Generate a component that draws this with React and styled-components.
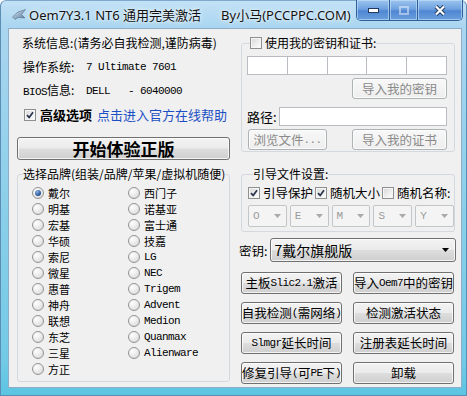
import React from "react";
import styled, { createGlobalStyle } from "styled-components";

const GlobalStyle = createGlobalStyle`
  html, body {
    margin: 0;
    padding: 0;
  }
  body {
    width: 467px;
    height: 396px;
    overflow: hidden;
    font-family: "Noto Sans CJK SC", "Noto Sans", sans-serif;
    font-size: 12px;
    color: #000;
  }
  * {
    box-sizing: border-box;
  }
`;

const brands = [
  "戴尔", "明基", "宏基", "华硕", "索尼", "微星", "惠普", "神舟", "联想", "东芝", "三星", "方正",
  "西门子", "诺基亚", "富士通", "技嘉", "LG", "NEC", "Trigem", "Advent", "Medion", "Quanmax", "Alienware"
];

const actions = [
  "主板Slic2.1激活", "导入Oem7中的密钥",
  "自我检测(需网络)", "检测激活状态",
  "Slmgr延长时间", "注册表延长时间",
  "修复引导(可PE下)", "卸载"
];

// latin runs get the narrow serif mono look of the old dialog font
const mixed = text =>
  text
    .split(/([\x20-\x7e]+)/)
    .filter(Boolean)
    .map((part, i) =>
      /^[\x20-\x7e]+$/.test(part) ? <Latin key={i}>{part}</Latin> : <span key={i}>{part}</span>
    );

function CheckBox({ checked }) {
  return (
    <Box>
      {checked && (
        <svg width="8" height="8" viewBox="0 0 8 8">
          <path d="M1 4.2 L3.2 6.4 L7 1.2" fill="none" stroke="#27324d" strokeWidth="1.7" />
        </svg>
      )}
    </Box>
  );
}

function Arrow({ color }) {
  return (
    <svg width="7" height="4" viewBox="0 0 7 4">
      <path d="M0 0 H7 L3.5 4 Z" fill={color} />
    </svg>
  );
}

function App() {
  return (
    <>
      <GlobalStyle />
      <Window>
        <TitleBar>
          <svg width="14" height="11" viewBox="0 0 14 11">
            <defs>
              <linearGradient id="ic" x1="0" y1="0" x2="1" y2="1">
                <stop offset="0" stopColor="#dfeaf4" />
                <stop offset="1" stopColor="#4f7397" />
              </linearGradient>
            </defs>
            <path d="M0.5 8 L6 3 L13.5 0.5 L9.5 5.5 L13 9 L6 8.5 L3 10.5 Z" fill="url(#ic)" stroke="#55708c" strokeWidth="0.6" />
          </svg>
          <Title>
            Oem7Y3.1 NT6 通用完美激活<By>By小马(PCCPPC.COM)</By>
          </Title>
          <Caption>
            <CapButton $w={32}>
              <svg width="11" height="5" viewBox="0 0 11 5">
                <rect x="0.5" y="0.5" width="10" height="4" fill="#fff" stroke="#1f3a5e" />
              </svg>
            </CapButton>
            <CapButton $w={28}>
              <svg width="10" height="9" viewBox="0 0 10 9" opacity="0.45">
                <rect x="1" y="1" width="8" height="7" fill="none" stroke="#fff" strokeWidth="2" />
              </svg>
            </CapButton>
            <CapButton $w={45}>
              <svg width="12" height="11" viewBox="0 0 12 11">
                <path d="M2 1.5 L10 9.5 M10 1.5 L2 9.5" stroke="#1f3a5e" strokeWidth="4" />
                <path d="M2 1.5 L10 9.5 M10 1.5 L2 9.5" stroke="#fff" strokeWidth="2.2" />
              </svg>
            </CapButton>
          </Caption>
        </TitleBar>

        <Client>
          <LeftCol>
            <InfoRow $pad={5}>系统信息:(请务必自我检测,谨防病毒)</InfoRow>
            <InfoRow>
              <InfoLabel>操作系统:</InfoLabel>
              <Latin>7 Ultimate 7601</Latin>
            </InfoRow>
            <InfoRow>
              <InfoLabel>
                <Latin>BIOS</Latin>信息:
              </InfoLabel>
              <Latin>DELL   - 6040000</Latin>
            </InfoRow>
            <InfoRow $pad={7}>
              <CheckBox checked />
              <Strong>高级选项</Strong>
              <HelpLink>点击进入官方在线帮助</HelpLink>
            </InfoRow>
            <BigButton>开始体验正版</BigButton>

            <Group>
              <Legend $left={5}>选择品牌(组装/品牌/苹果/虚拟机随便)</Legend>
              <RadioGrid>
                {brands.map((name, i) => (
                  <RadioItem key={name}>
                    <RadioDot $on={i === 0} />
                    {mixed(name)}
                  </RadioItem>
                ))}
              </RadioGrid>
            </Group>
          </LeftCol>

          <RightCol>
            <Group $top={5} $pad="6px 7px 1px 5px">
              <Legend $left={3}>
                <CheckBox />
                使用我的密钥和证书:
              </Legend>
              <KeyRow>
                {[0, 1, 2, 3, 4].map(i => (
                  <KeyBox key={i} />
                ))}
              </KeyRow>
              <EndRow>
                <Btn disabled $w={95} $h={21}>导入我的密钥</Btn>
              </EndRow>
              <PathRow>
                <PathLabel>路径:</PathLabel>
                <PathInput />
              </PathRow>
              <SplitRow>
                <Btn disabled $w={79} $h={21}>
                  浏览文件<Latin>...</Latin>
                </Btn>
                <Btn disabled $w={95} $h={21}>导入我的证书</Btn>
              </SplitRow>
            </Group>

            <Group $top={15} $pad="5px 0 4px 6px">
              <Legend $left={5}>引导文件设置:</Legend>
              <CheckRow>
                <CheckItem>
                  <CheckBox checked />
                  引导保护
                </CheckItem>
                <CheckItem>
                  <CheckBox checked />
                  随机大小
                </CheckItem>
                <CheckItem>
                  <CheckBox />
                  随机名称:
                </CheckItem>
              </CheckRow>
              <ComboRow>
                {["O", "E", "M", "S", "Y"].map(letter => (
                  <MiniCombo key={letter}>
                    <Latin>{letter}</Latin>
                    <Arrow color="#a9a9a9" />
                  </MiniCombo>
                ))}
              </ComboRow>
            </Group>

            <KeyLine>
              <span>密钥:</span>
              <EditionCombo>
                7戴尔旗舰版
                <Arrow color="#000" />
              </EditionCombo>
            </KeyLine>

            <ActionGrid>
              {actions.map(label => (
                <Btn key={label} $h={22}>
                  {mixed(label)}
                </Btn>
              ))}
            </ActionGrid>
          </RightCol>
        </Client>
      </Window>
    </>
  );
}

const Window = styled.div`
  width: 467px;
  height: 396px;
  display: flex;
  flex-direction: column;
  border: 1px solid #5b8db5;
  border-top-color: #7ea9ca;
  border-radius: 6px 6px 0 0;
  background: linear-gradient(180deg, #c2e1f6 0px, #a9d5f0 27px, #8fd0ea 180px, #72cae6 360px, #5ac4e1 396px);
`;

const TitleBar = styled.div`
  height: 27px;
  flex: none;
  display: flex;
  align-items: center;
  padding-left: 11px;
`;

const Title = styled.div`
  margin-left: 3px;
  font-family: "Noto Sans", "Noto Sans CJK SC", sans-serif;
  font-size: 13px;
  line-height: 16px;
  color: #111;
  text-shadow: 0 0 6px rgba(255, 255, 255, 0.95), 0 0 2px rgba(255, 255, 255, 0.9);
  white-space: nowrap;
`;

const By = styled.span`
  margin-left: 20px;
`;

const Caption = styled.div`
  display: flex;
  align-self: flex-start;
  margin: -1px 3px 0 auto;
  border: 1px solid #2f5f97;
  border-top: none;
  border-radius: 0 0 5px 5px;
  overflow: hidden;
`;

const CapButton = styled.div`
  width: ${p => p.$w}px;
  height: 20px;
  display: flex;
  align-items: center;
  justify-content: center;
  background: linear-gradient(180deg, #9cc4ee 0%, #6fa2e0 45%, #4f86d2 55%, #6aa0dd 100%);
  box-shadow: inset 0 0 0 1px rgba(200, 225, 250, 0.6);
  & + & {
    border-left: 1px solid #2f5f97;
  }
`;

const Client = styled.div`
  flex: 1;
  margin: 0 4px 7px 7px;
  display: flex;
  gap: 8px;
  padding: 2px 5px 0 8px;
  background: #f0f0f0;
  border: 1px solid #8eadc6;
`;

const LeftCol = styled.div`
  width: 213px;
  flex: none;
  display: flex;
  flex-direction: column;
`;

const RightCol = styled.div`
  width: 218px;
  flex: none;
  display: flex;
  flex-direction: column;
`;

const Latin = styled.span`
  font-family: "Liberation Mono", "DejaVu Sans Mono", monospace;
  font-size: 11px;
  letter-spacing: -0.6px;
  white-space: pre;
`;

const InfoRow = styled.div`
  height: 24px;
  display: flex;
  align-items: center;
  padding-left: ${p => p.$pad || 6}px;
  line-height: 14px;
  white-space: nowrap;
`;

const InfoLabel = styled.span`
  width: 63px;
  flex: none;
`;

const Strong = styled.span`
  margin-left: 4px;
  font-size: 13px;
  font-weight: bold;
`;

const HelpLink = styled.span`
  margin-left: 5px;
  font-size: 13px;
  color: #1d4fc4;
`;

const Box = styled.span`
  width: 12px;
  height: 12px;
  flex: none;
  display: inline-flex;
  align-items: center;
  justify-content: center;
  border: 1px solid #8e8f8f;
  background: linear-gradient(135deg, #d6d6d6, #f2f2f2 65%, #fff);
  box-shadow: inset 0 0 0 1px #f6f6f6;
`;

const Btn = styled.button`
  width: ${p => (p.$w ? `${p.$w}px` : "auto")};
  height: ${p => p.$h}px;
  padding: 0;
  display: flex;
  align-items: center;
  justify-content: center;
  border: 1px solid ${p => (p.disabled ? "#adb2b5" : "#707070")};
  border-radius: 3px;
  background: ${p =>
    p.disabled
      ? "linear-gradient(180deg, #f8f8f8, #eeeeee)"
      : "linear-gradient(180deg, #f3f3f3 0%, #ebebeb 48%, #dddddd 52%, #cfcfcf 100%)"};
  box-shadow: inset 0 0 0 1px rgba(255, 255, 255, 0.75);
  color: ${p => (p.disabled ? "#8a8a8a" : "#000")};
  font-family: "Noto Sans CJK SC", sans-serif;
  font-size: 12.5px;
  line-height: 14px;
  white-space: nowrap;
`;

const BigButton = styled(Btn)`
  height: 23px;
  margin-top: 10px;
  font-size: 17px;
  font-weight: bold;
  line-height: 20px;
`;

const Group = styled.fieldset`
  margin: ${p => p.$top || 7}px ${p => (p.$top ? "1px 0 3px" : "0 0 0")};
  padding: ${p => p.$pad || "0"};
  min-width: 0;
  border: 1px solid #d3d9de;
  border-radius: 3px;
`;

const Legend = styled.legend`
  margin-left: ${p => p.$left}px;
  padding: 0;
  height: 14px;
  display: flex;
  align-items: center;
  gap: 3px;
  line-height: 14px;
  white-space: nowrap;
`;

const RadioGrid = styled.div`
  display: grid;
  grid-template-columns: 96px 1fr;
  grid-template-rows: repeat(12, 16px);
  grid-auto-flow: column;
  padding: 4px 0 4px 14px;
`;

const RadioItem = styled.label`
  display: flex;
  align-items: center;
  gap: 4px;
  font-size: 11px;
  line-height: 14px;
`;

const RadioDot = styled.span`
  width: 12px;
  height: 12px;
  flex: none;
  border-radius: 50%;
  border: 1px solid #939393;
  background: radial-gradient(circle at 35% 30%, #ffffff, #e6e6e6 60%, #cfcfcf);
  display: inline-flex;
  align-items: center;
  justify-content: center;
  &::after {
    content: "";
    display: ${p => (p.$on ? "block" : "none")};
    width: 6px;
    height: 6px;
    border-radius: 50%;
    background: radial-gradient(circle at 35% 30%, #8db4e2, #2a5a9c 60%, #163a6e);
  }
`;

const KeyRow = styled.div`
  display: flex;
  height: 19px;
`;

const KeyBox = styled.div`
  flex: 1;
  background: #fff;
  border: 1px solid #b9bdc2;
  & + & {
    margin-left: -1px;
  }
`;

const EndRow = styled.div`
  display: flex;
  justify-content: flex-end;
  margin-top: 3px;
`;

const PathRow = styled.div`
  display: flex;
  align-items: center;
  height: 19px;
  margin-top: 8px;
`;

const PathLabel = styled.span`
  width: 32px;
  flex: none;
  font-size: 13px;
`;

const PathInput = styled.div`
  flex: 1;
  height: 19px;
  background: #fff;
  border: 1px solid #b9bdc2;
`;

const SplitRow = styled.div`
  display: flex;
  justify-content: space-between;
  margin-top: 3px;
  padding-left: 1px;
`;

const CheckRow = styled.div`
  display: flex;
  height: 14px;
  gap: 2px;
  font-size: 12.5px;
`;

const CheckItem = styled.label`
  display: flex;
  align-items: center;
  gap: 3px;
  line-height: 14px;
  white-space: nowrap;
`;

const ComboRow = styled.div`
  display: flex;
  gap: 3px;
  margin-top: 5px;
`;

const MiniCombo = styled.div`
  width: 39px;
  height: 22px;
  display: flex;
  align-items: center;
  justify-content: space-between;
  padding: 0 5px 0 4px;
  border: 1px solid #c3c6c9;
  border-radius: 2px;
  background: #f4f4f4;
  color: #9a9a9a;
`;

const KeyLine = styled.div`
  display: flex;
  align-items: center;
  gap: 3px;
  height: 24px;
  margin-top: 6px;
  padding-left: 1px;
  font-size: 12.5px;
`;

const EditionCombo = styled.div`
  flex: 1;
  height: 24px;
  display: flex;
  align-items: center;
  justify-content: space-between;
  padding: 0 6px 0 3px;
  border: 1px solid #707070;
  border-radius: 3px;
  background: linear-gradient(180deg, #f3f3f3 0%, #ebebeb 48%, #dddddd 52%, #cfcfcf 100%);
  box-shadow: inset 0 0 0 1px rgba(255, 255, 255, 0.75);
  font-size: 14px;
`;

const ActionGrid = styled.div`
  display: grid;
  grid-template-columns: 101px 101px;
  column-gap: 11px;
  row-gap: 8px;
  margin: 10px 0 0 3px;
`;

export default App;
